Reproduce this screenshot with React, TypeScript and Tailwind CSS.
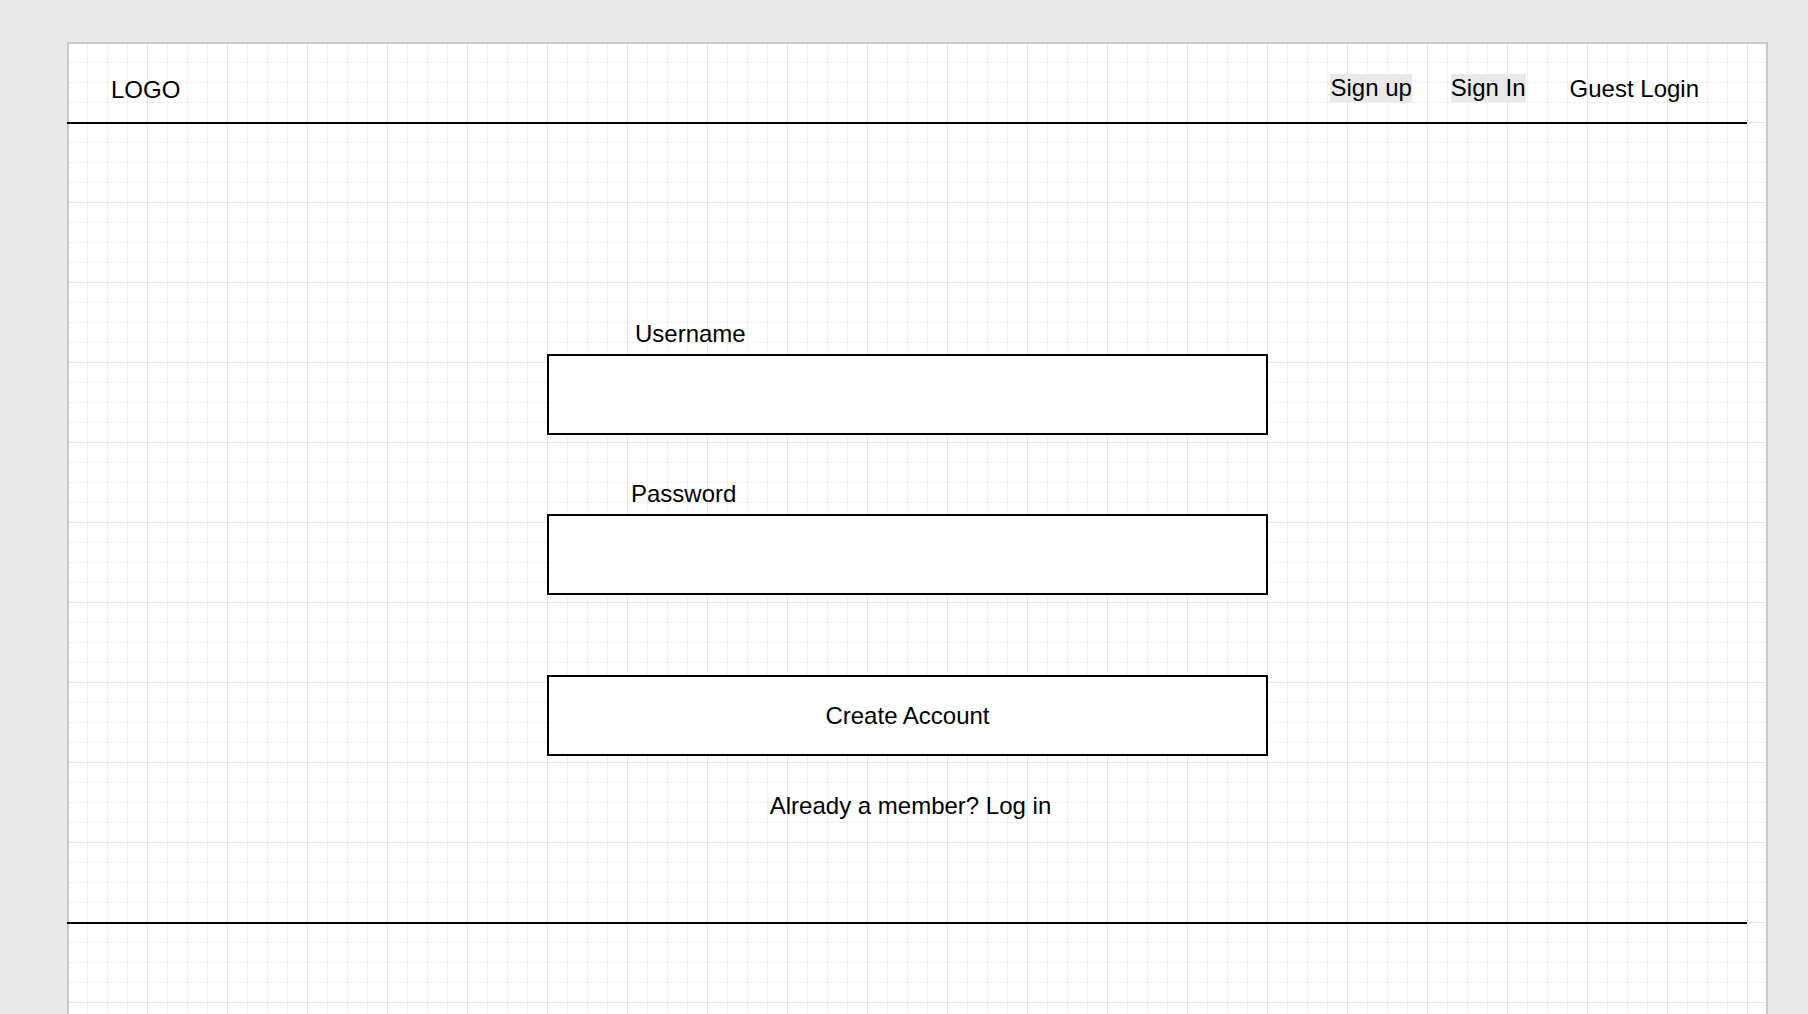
import React from 'react';

export default function App() {
  return (
    <div className="h-screen w-full overflow-hidden bg-[#e9e9e9] pl-[67px] pt-[42px] font-['Liberation_Sans',Arial,sans-serif] text-[24px] leading-[28px] text-black">
      {/* wireframe canvas with grid */}
      <div className="w-[1701px] h-[1000px] border-2 border-b-0 border-[#c9c9c9] bg-white bg-origin-border [background-image:linear-gradient(to_right,#e6e6e6_1px,transparent_1px),linear-gradient(to_bottom,#e6e6e6_1px,transparent_1px),linear-gradient(to_right,#f2f2f2_1px,transparent_1px),linear-gradient(to_bottom,#f2f2f2_1px,transparent_1px)] [background-size:80px_80px,80px_80px,20px_20px,20px_20px]">
        <header className="-ml-[2px] w-[1680px] h-[80px] border-b-2 border-black flex items-start pt-[30px] pl-[44px] pr-[48px]">
          <span className="mt-[2px]">LOGO</span>
          <nav className="ml-auto flex items-start">
            <a className="bg-[#e9e9e9]">Sign up</a>
            <a className="ml-[39px] bg-[#e9e9e9]">Sign In</a>
            <a className="ml-[44px] mt-[1px]">Guest Login</a>
          </nav>
        </header>

        <main>
          <form className="ml-[478px] w-[721px] pt-[196px] flex flex-col">
            <label className="pl-[88px]">Username</label>
            <input className="mt-[6px] h-[81px] border-2 border-black bg-white px-3 outline-none" />
            <label className="mt-[45px] pl-[84px]">Password</label>
            <input type="password" className="mt-[6px] h-[81px] border-2 border-black bg-white px-3 outline-none" />
            <button type="button" className="mt-[80px] h-[81px] border-2 border-black bg-white">
              Create Account
            </button>
            <p className="mt-[36px] pl-[6px] text-center">Already a member? Log in</p>
          </form>
          <div className="-ml-[2px] mt-[102px] w-[1680px] border-b-2 border-black" />
        </main>
      </div>
    </div>
  );
}
